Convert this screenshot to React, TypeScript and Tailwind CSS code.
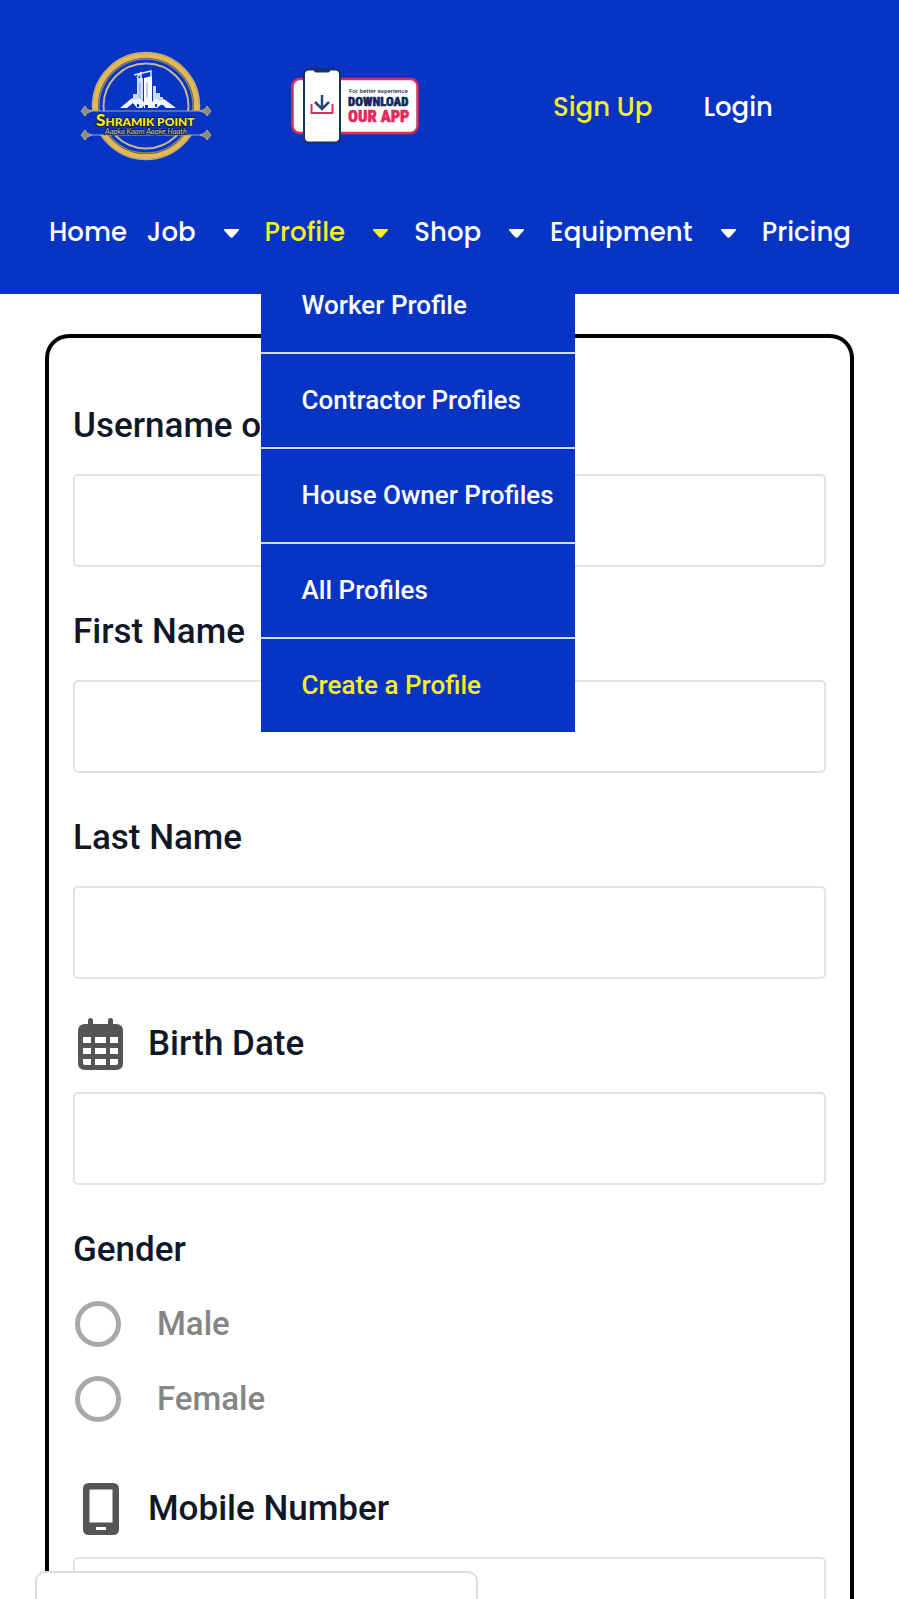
import { useState } from "react";

interface MenuItem {
  name: string;
  active?: boolean;
  caret?: boolean;
}

const menuItems: MenuItem[] = [
  { name: "Home" },
  { name: "Job", caret: true },
  { name: "Profile", caret: true, active: true },
  { name: "Shop", caret: true },
  { name: "Equipment", caret: true },
  { name: "Pricing" },
];

const profileLinks = [
  "Worker Profile",
  "Contractor Profiles",
  "House Owner Profiles",
  "All Profiles",
  "Create a Profile",
];

function Logo() {
  return (
    <svg width="132" height="112" viewBox="0 0 132 112" role="img" aria-label="Shramik Point">
      <g fill="none">
        <circle cx="66" cy="55" r="53.500" stroke="#b9ab84" strokeWidth="1.500" />
        <circle cx="66" cy="55" r="50.500" stroke="#e3b950" strokeWidth="5" />
        <circle cx="66" cy="55" r="47" stroke="#8d8462" strokeWidth="1.500" />
        <circle cx="66" cy="55" r="42.500" stroke="#c3b690" strokeWidth="2" />
      </g>
      <rect x="3" y="60" width="126" height="24" fill="#0834c4" />
      <path d="M8 60H124M8 84H124" stroke="#a8a68e" strokeWidth="1.200" />
      <g fill="#8d8c80" stroke="#b9a873" strokeWidth="1">
        <path d="M1 60l4-5 2 3 5 2-5 2-2 3z" />
        <path d="M131 60l-4-5-2 3-5 2 5 2 2 3z" />
        <path d="M1 84l4-5 2 3 5 2-5 2-2 3z" />
        <path d="M131 84l-4-5-2 3-5 2 5 2 2 3z" />
      </g>
      <g fill="#c9d8f7">
        <path d="M53 43h4v10h-4zM57 27h6v27h-6zM73 35h3v18h-3zM76 42h4v12h-4zM80 46h3v8h-3z" />
      </g>
      <path d="M64 27l8-2v32h-8z" fill="#fff" />
      <path d="M61 47V21M54 24l17-4v6M57 27l4-6" fill="none" stroke="#dfe8fb" strokeWidth="1.500" />
      <path d="M67 31v20M60 31v18" stroke="#7f9be2" strokeWidth="1" />
      <g fill="#eef3fd">
        <path d="M40 57l12-10 4 2 3-2 5 4 3-5 5 5 4-4 4 3 4-2 12 9H86l-4-4-5 4h-5l-5-6-5 6h-5l-4-5-6 5z" />
      </g>
      <path d="M65 54h3v3h-3zM57 53h2v3h-2zM75 53h2v3h-2z" fill="#0834c4" />
      <text
        x="16"
        y="75"
        fontFamily="Lato, sans-serif"
        fontSize="12"
        fontWeight="900"
        fill="#f7ee21"
        stroke="#171a10"
        strokeWidth="1.500"
        paintOrder="stroke"
      >
        <tspan fontSize="17">S</tspan>HRAMIK POINT
      </text>
      <text
        x="66"
        y="83"
        textAnchor="middle"
        fontFamily="Lato, sans-serif"
        fontStyle="italic"
        fontSize="7.500"
        fill="#b8c2d2"
        stroke="#10182e"
        strokeWidth="1.500"
        paintOrder="stroke"
      >
        Aapka Kaam Aapke Haath
      </text>
    </svg>
  );
}

function DownloadBadge() {
  return (
    <svg width="130" height="78" viewBox="0 0 130 78" role="img" aria-label="Download our app">
      <rect x="2.500" y="11" width="125" height="54" rx="7" fill="#fff" stroke="#dc2d5c" strokeWidth="2.500" />
      <rect x="14" y="1.500" width="36" height="73" rx="5" fill="#fff" stroke="#15345f" strokeWidth="2" />
      <path d="M24 0.500h16v2q0 2-2 2H26q-2 0-2-2z" fill="#15345f" />
      <path d="M32 27v14M25 34l7 7 7-7" fill="none" stroke="#24477a" strokeWidth="2.500" />
      <path d="M21.500 36v9h21v-9" fill="none" stroke="#dc2d5c" strokeWidth="2" />
      <text x="59" y="25" fontFamily="Roboto, sans-serif" fontSize="6.200" fill="#26314d">
        For better experience
      </text>
      <text
        x="58"
        y="38"
        fontFamily="'Roboto Condensed', Roboto, sans-serif"
        fontSize="12.800"
        fontWeight="900"
        fill="#14275a"
        stroke="#14275a"
        strokeWidth="0.500"
      >
        DOWNLOAD
      </text>
      <text
        x="58"
        y="54"
        fontFamily="'Roboto Condensed', Roboto, sans-serif"
        fontSize="16.500"
        fontWeight="900"
        fill="#e6285c"
        stroke="#e6285c"
        strokeWidth="0.500"
      >
        OUR APP
      </text>
    </svg>
  );
}

function Caret() {
  return (
    <svg width="15" height="9" viewBox="0 0 15 9" fill="currentColor" aria-hidden="true">
      <path d="M.8 0h13.400q1.200.2.600 1.400L9 8q-1.500 1.500-3 0L.2 1.400Q-.4.200.8 0z" />
    </svg>
  );
}

function CalendarIcon() {
  return (
    <svg width="46" height="52" viewBox="0 0 46 52" aria-hidden="true">
      <path
        fill="#555"
        fillRule="evenodd"
        d="M10 6V2.500a2.500 2.500 0 015 0V6h15V2.500a2.500 2.500 0 015 0V6h3q7 0 7 7v32q0 7-7 7H7q-7 0-7-7V13q0-7 7-7zM5 19v6h8v-6zM17 19v6h11v-6zM32 19v6h8v-6zM5 30v6h8v-6zM17 30v6h11v-6zM32 30v6h8v-6zM5 41v4q0 2 2 2h6v-6zM17 41v6h11v-6zM32 41v6h6q2 0 2-2v-4z"
      />
    </svg>
  );
}

function MobileIcon() {
  return (
    <svg width="46" height="52" viewBox="0 0 46 52" aria-hidden="true">
      <path
        fill="#555"
        fillRule="evenodd"
        d="M11 0h24q6 0 6 6v40q0 6-6 6H11q-6 0-6-6V6q0-6 6-6zM11.500 6.500v33h23v-33zM18 44v3h10v-3z"
      />
    </svg>
  );
}

interface FieldProps {
  id: string;
  label: string;
  icon?: React.ReactNode;
}

function Field({ id, label, icon }: FieldProps) {
  return (
    <div>
      <label
        htmlFor={id}
        className="flex h-12 items-center gap-6 text-[35px] font-medium text-[#101828]"
      >
        {icon && <span className="pl-[5px]">{icon}</span>}
        {label}
      </label>
      <input
        id={id}
        type="text"
        className="mt-6 block h-[93px] w-full rounded-[5px] border-2 border-[#e2e2e2] bg-white px-6 text-3xl outline-none"
      />
    </div>
  );
}

export default function App() {
  const [gender, setGender] = useState("");

  return (
    <div className="min-h-screen bg-white font-[Roboto,sans-serif]">
      <header className="bg-[#0834c4] font-[Poppins,Inter,sans-serif] text-[26px] font-medium text-white">
        <div className="flex h-[214px] items-center pl-20">
          <a href="#home">
            <Logo />
          </a>
          <a href="#app" className="ml-[78px]">
            <DownloadBadge />
          </a>
          <a href="#signup" className="ml-[133px] text-[#f3ee2c]">
            Sign Up
          </a>
          <a href="#login" className="ml-[51px]">
            Login
          </a>
        </div>
        <nav className="h-20 pr-12 pl-[49px]">
          <ul className="grid grid-cols-[98fr_118fr_150fr_136fr_212fr_87fr]">
            {menuItems.map((item) => (
              <li
                key={item.name}
                className={`relative flex h-9 items-center justify-between ${
                  item.active ? "text-[#f7ee21]" : ""
                }`}
              >
                <a href={`#${item.name.toLowerCase()}`}>{item.name}</a>
                {item.caret && (
                  <span className="mr-[26px] pt-0.5">
                    <Caret />
                  </span>
                )}
                {item.active && (
                  <ul className="absolute top-[45px] -left-1 z-10 w-[314px] divide-y-2 divide-[#cfdcfa] bg-[#0834c4] font-[Roboto,sans-serif] text-white">
                    {profileLinks.map((link) => (
                      <li key={link}>
                        <a
                          href="#profile"
                          className={`flex h-[93px] items-center pl-[41px] whitespace-nowrap ${
                            link === "Create a Profile" ? "text-[#f7ee21]" : ""
                          }`}
                        >
                          {link}
                        </a>
                      </li>
                    ))}
                  </ul>
                )}
              </li>
            ))}
          </ul>
        </nav>
      </header>

      <main className="px-[45px] pt-10">
        <form className="flex flex-col gap-[41px] rounded-t-3xl border-4 border-b-0 border-black px-6 pt-16">
          <Field id="username" label="Username or" />
          <Field id="first-name" label="First Name" />
          <Field id="last-name" label="Last Name" />
          <Field id="birth-date" label="Birth Date" icon={<CalendarIcon />} />
          <fieldset>
            <legend className="h-12 text-[35px] leading-[48px] font-medium text-[#101828]">
              Gender
            </legend>
            <div className="flex flex-col gap-[29px] pt-[27px] pb-[22px]">
              {["Male", "Female"].map((option) => (
                <label
                  key={option}
                  className="flex h-[46px] items-center gap-9 pl-0.5 text-[33px] font-medium text-[#858585]"
                >
                  <input
                    type="radio"
                    name="gender"
                    value={option}
                    checked={gender === option}
                    onChange={() => setGender(option)}
                    className="size-[46px] appearance-none rounded-full border-[5px] border-[#a9a9a9] checked:border-[14px]"
                  />
                  {option}
                </label>
              ))}
            </div>
          </fieldset>
          <Field id="mobile" label="Mobile Number" icon={<MobileIcon />} />
        </form>
      </main>

      <div className="fixed bottom-0 left-[35px] h-7 w-[443px] rounded-t-[10px] border-2 border-b-0 border-[#dcdce0] bg-white" />
    </div>
  );
}
